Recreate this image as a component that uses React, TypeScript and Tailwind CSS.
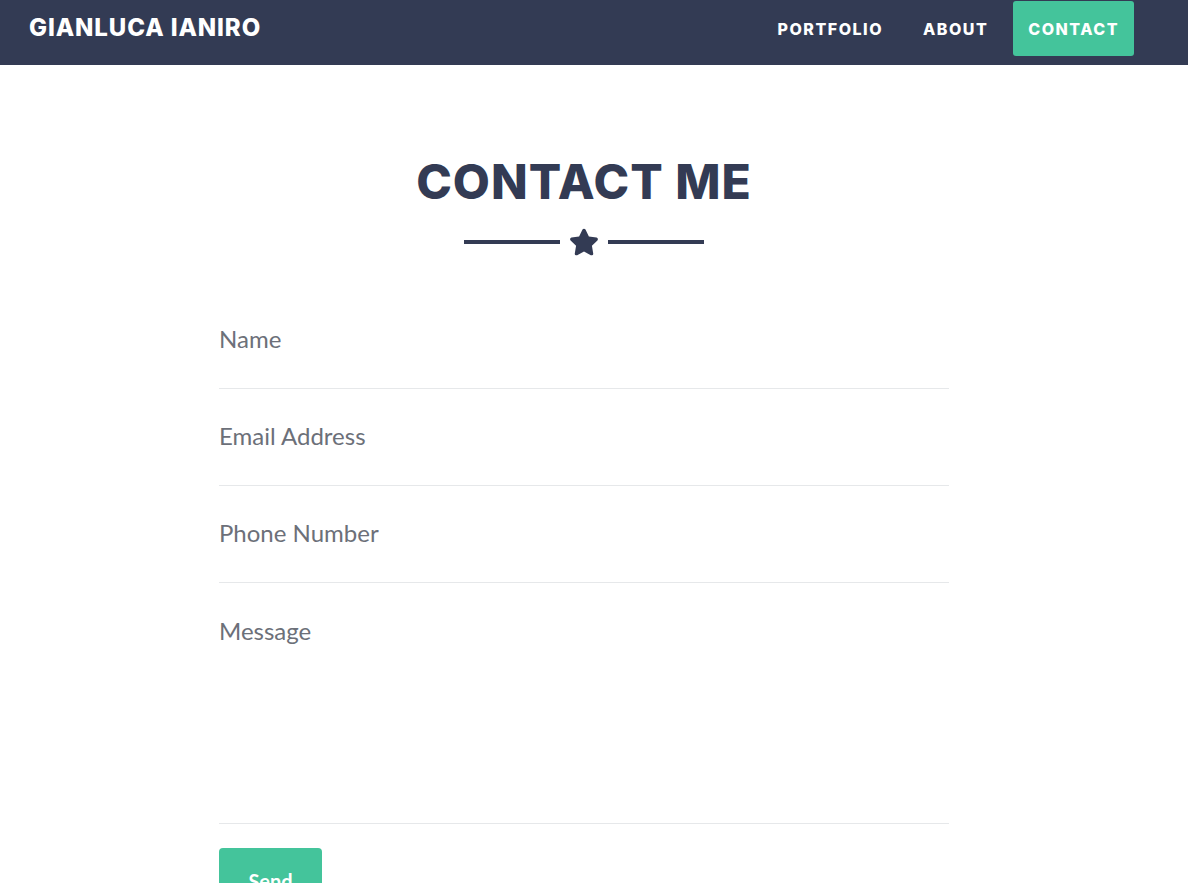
import { FaStar } from 'react-icons/fa';

const navLinks = ['Portfolio', 'About', 'Contact'];

function Navbar() {
  return (
    <nav className="h-[65px] bg-[#333b54] flex items-start justify-between pl-[29px] pr-[54px]">
      <a className="mt-[15px] text-white text-[24px] leading-[26px] font-extrabold uppercase tracking-[0.9px] font-['Inter',sans-serif]">
        Gianluca Ianiro
      </a>
      <ul className="flex gap-[10px] mt-[1px]">
        {navLinks.map((link) => (
          <li key={link}>
            <a
              className={
                'flex items-center h-[55px] px-[15px] rounded-[3px] text-white text-[16px] font-extrabold uppercase tracking-[1.5px] font-[\'Inter\',sans-serif] ' +
                (link === 'Contact' ? 'bg-[#44c49b]' : '')
              }
            >
              {link}
            </a>
          </li>
        ))}
      </ul>
    </nav>
  );
}

function Divider() {
  return (
    <div className="flex items-center justify-center gap-[9px] mt-[18px]">
      <span className="w-[96px] h-[4px] bg-[#333b54]" />
      <FaStar className="text-[#333b54] w-[30px] h-[28px]" />
      <span className="w-[96px] h-[4px] bg-[#333b54]" />
    </div>
  );
}

export default function App() {
  return (
    <div className="min-h-screen bg-white">
      <Navbar />
      <section className="pr-[20px]">
        <h2 className="mt-[89px] text-center text-[#333b54] text-[48px] leading-[56px] font-extrabold uppercase tracking-[1px] font-['Inter',sans-serif]">
          Contact Me
        </h2>
        <Divider />
        <form className="w-[730px] mx-auto mt-[36px] font-['Lato',sans-serif]">
          {/* Name / Email / Phone */}
          {['Name', 'Email Address', 'Phone Number'].map((field) => (
            <div key={field} className="border-b border-[#e6e8ea]">
              <input
                placeholder={field}
                className="w-full h-[96px] pb-[4px] bg-transparent text-[24px] text-[#6c7079] placeholder:text-[#6c7079] focus:outline-none"
              />
            </div>
          ))}
          {/* Message */}
          <div className="border-b border-[#e6e8ea]">
            <textarea
              placeholder="Message"
              className="w-full h-[240px] pt-[30px] leading-[36px] resize-none bg-transparent text-[24px] text-[#6c7079] placeholder:text-[#6c7079] focus:outline-none block"
            />
          </div>
          <button
            type="button"
            className="mt-[24px] w-[103px] h-[60px] pt-[6px] rounded-[4px] bg-[#44c49b] text-white text-[20px] font-bold"
          >
            Send
          </button>
        </form>
      </section>
    </div>
  );
}
